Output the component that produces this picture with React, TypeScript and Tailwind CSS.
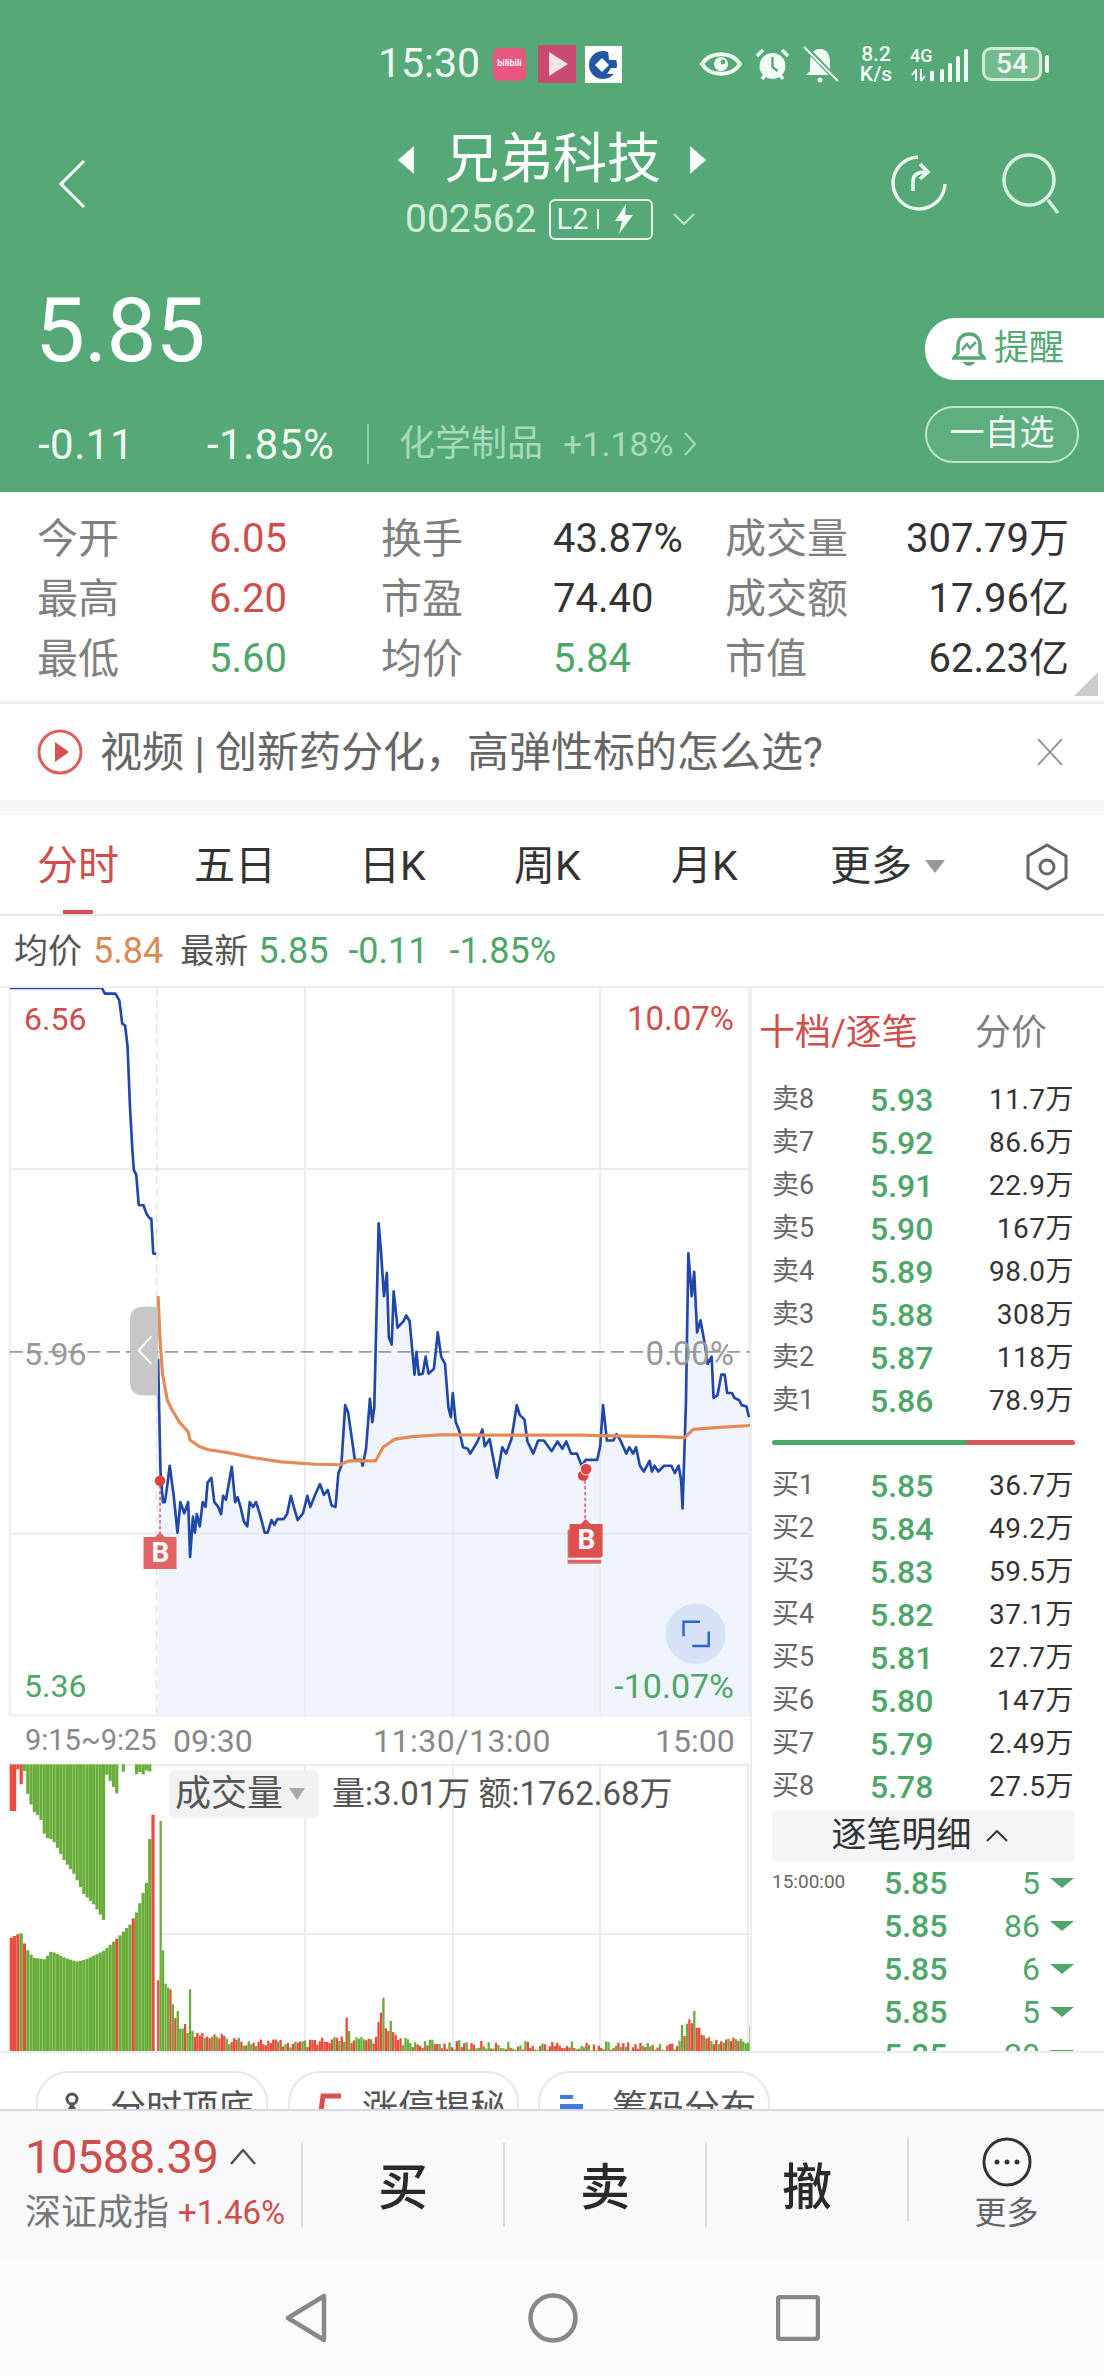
import React from "react";

const blue: [number, number][] = [[326,780],[331,1015],[336,1075],[340,1075],[345,1040],[350,1000],[358,1060],[366,1138],[372,1075],[380,1098],[388,1075],[392,1188],[398,1105],[402,1138],[406,1100],[412,1125],[418,1075],[424,1085],[428,1035],[436,1025],[442,1075],[450,1085],[456,1100],[460,1062],[466,1070],[478,1002],[485,1075],[490,1065],[496,1085],[503,1115],[510,1125],[515,1075],[522,1085],[528,1075],[536,1100],[546,1138],[552,1138],[560,1112],[566,1122],[572,1110],[585,1110],[592,1100],[600,1062],[606,1085],[614,1112],[625,1098],[634,1062],[640,1085],[650,1060],[660,1038],[668,1060],[676,1050],[684,1082],[692,1085],[698,1015],[704,1000],[712,875],[718,890],[732,988],[745,988],[748,1000],[755,965],[763,862],[768,910],[772,880],[781,500],[786,560],[792,650],[798,602],[802,735],[808,750],[812,640],[820,715],[832,702],[838,690],[845,702],[855,812],[859,765],[864,812],[872,810],[878,775],[884,810],[895,800],[903,725],[910,775],[918,790],[925,880],[930,900],[934,850],[940,910],[948,930],[955,962],[965,965],[970,975],[985,950],[995,925],[1000,960],[1010,945],[1025,1025],[1036,962],[1044,975],[1055,945],[1066,875],[1072,895],[1082,905],[1088,950],[1100,975],[1110,948],[1122,948],[1138,970],[1150,950],[1160,965],[1168,950],[1178,975],[1190,975],[1200,1000],[1208,988],[1232,988],[1238,960],[1244,875],[1252,948],[1265,948],[1272,935],[1280,948],[1292,975],[1298,962],[1306,975],[1312,962],[1320,1000],[1328,1012],[1340,990],[1345,1012],[1350,1000],[1358,1012],[1370,1000],[1385,1000],[1392,1015],[1400,1000],[1405,1030],[1408,1088],[1415,870],[1420,562],[1427,650],[1432,600],[1438,725],[1445,700],[1455,755],[1460,790],[1468,775],[1472,860],[1480,855],[1488,812],[1495,812],[1500,850],[1510,850],[1515,860],[1525,865],[1530,875],[1540,878],[1545,900]];
const pre: [number, number][] = [[20,14],[210,14],[216,26],[238,26],[246,40],[252,88],[258,92],[263,135],[268,260],[273,350],[276,390],[281,400],[286,462],[296,463],[302,480],[309,490],[312,490],[316,562],[322,563]];
const orange: [number, number][] = [[326,650],[330,740],[335,810],[345,865],[355,885],[370,910],[388,930],[392,947],[410,960],[430,967],[470,973],[520,983],[580,992],[650,997],[700,998],[720,990],[775,990],[790,962],[815,945],[850,940],[910,936],[1000,937],[1200,937],[1230,938],[1360,940],[1412,942],[1430,925],[1470,922],[1547,917]];
const pts = (a: [number, number][]) => a.map((p) => p.join(",")).join(" ");

const lerp = (a: [number, number][], x: number) => {
  if (x <= a[0][0]) return a[0][1];
  for (let i = 1; i < a.length; i++) {
    if (x <= a[i][0]) {
      const t = (x - a[i - 1][0]) / (a[i][0] - a[i - 1][0]);
      return a[i - 1][1] + t * (a[i][1] - a[i - 1][1]);
    }
  }
  return a[a.length - 1][1];
};
const rnd = (i: number) => {
  const v = Math.sin(i * 12.9898) * 43758.5453;
  return v - Math.floor(v);
};
const G = "#69ae3a";
const R = "#e84c3d";
const Y = (z: number) => z / 3 - 23;
const X = (z: number) => z / 2.063;

const botProfile: [number, number][] = [[20,590],[40,575],[50,620],[65,650],[90,655],[100,632],[110,635],[130,650],[155,662],[175,655],[210,630],[240,590],[265,550],[280,510],[300,420],[305,300],[312,228],[317,145]];
const topProfile: [number, number][] = [[50,140],[65,210],[80,230],[90,290],[105,295],[115,320],[130,360],[150,400],[170,460],[190,490],[212,540]];
const baseProfile: [number, number][] = [[325,710],[347,750],[360,845],[400,880],[440,895],[500,905],[620,915],[680,910],[700,900],[730,905],[770,900],[782,840],[795,860],[815,900],[850,912],[1000,918],[1390,920],[1400,900],[1420,850],[1440,870],[1460,905],[1530,900],[1547,915]];
const spikes: [number, number, string][] = [[330,240,G],[336,628,G],[347,745,R],[366,810,G],[392,745,G],[660,890,R],[712,830,R],[720,870,G],[782,815,R],[788,770,G],[803,840,G],[1420,835,R],[1428,810,G],[1407,852,G],[1545,855,G]];

function VolumeBars() {
  const rects: React.ReactNode[] = [];
  const base = Y(935);
  for (let zx = 20; zx < 318; zx += 6.8) {
    const x = X(zx);
    const redB = zx < 38 || (zx > 46 && zx < 49) || (zx > 237 && zx < 244) || (zx > 270 && zx < 277) || zx > 306;
    const by = lerp(botProfile, zx);
    rects.push(<rect key={"b" + zx} x={x} y={Y(by)} width={3.2} height={base - Y(by)} fill={redB ? R : G} />);
    let ty = 0;
    let col = G;
    if (zx < 28) { ty = 210; col = R; }
    else if (zx < 36) { ty = 85; col = R; }
    else if (zx < 42) { ty = 130; col = R; }
    else if (zx < 48) { ty = 90; col = G; }
    else if (zx <= 214) ty = lerp(topProfile, zx);
    else if (zx < 240) ty = lerp([[215, 95], [238, 158]], zx);
    else if (zx > 249 && zx < 258) ty = 92;
    else if (zx > 274 && zx < 311) ty = 84 + rnd(zx) * 18;
    if (ty) rects.push(<rect key={"t" + zx} x={x} y={Y(70)} width={3.2} height={Y(ty) - Y(70)} fill={col} />);
  }
  let i = 0;
  for (let zx = 324; zx < 1547; zx += 5.05) {
    i++;
    const x = X(zx);
    const j = (rnd(i) - 0.65) * 28;
    let h = Math.min(lerp(baseProfile, zx) + j, 928);
    let col = rnd(i * 3.1) > 0.62 ? G : R;
    for (const s of spikes) {
      if (Math.abs(s[0] - zx) < 2.6) { h = s[1]; col = s[2]; }
    }
    rects.push(<rect key={"s" + i} x={x} y={Y(h)} width={2.3} height={base - Y(h)} fill={col} />);
  }
  return <>{rects}</>;
}

const num = "text-[#333]";
function StatRow({ a, b, c, d, e, f, bc, dc }: { a: string; b: string; c: string; d: string; e: string; f: string; bc: string; dc: string }) {
  return (
    <>
      <span className="text-[41px] text-[#808080] h-[60px] leading-[60px]">{a}</span>
      <span className={"text-[40px] h-[60px] leading-[60px] " + bc}>{b}</span>
      <span className="text-[41px] text-[#808080] h-[60px] leading-[60px]">{c}</span>
      <span className={"text-[40px] h-[60px] leading-[60px] " + dc}>{d}</span>
      <span className="text-[41px] text-[#808080] h-[60px] leading-[60px]">{e}</span>
      <span className={"text-[40px] h-[60px] leading-[60px] text-right " + num}>{f}</span>
    </>
  );
}

function Quote({ l, p, q }: { l: string; p: string; q: string }) {
  return (
    <div className="flex items-center h-[43px] shrink-0 pl-[20px] pr-[30px]">
      <span className="w-[98px] text-[27px] text-[#666] whitespace-nowrap">{l}</span>
      <span className="text-[32px] text-[#4ea769] font-medium">{p}</span>
      <span className="flex-1 text-right text-[28px] text-[#333] tracking-[0.5px] whitespace-nowrap">{q}</span>
    </div>
  );
}

function Tick({ t, p, q }: { t?: string; p: string; q: string }) {
  return (
    <div className="flex items-center h-[43px] shrink-0 pl-[20px] pr-[29px]">
      <span className="w-[112px] text-[19px] text-[#666]">{t}</span>
      <span className="text-[32px] text-[#4ea769] font-medium">{p}</span>
      <span className="flex-1 text-right text-[32px] text-[#4ea769] pr-[9px]">{q}</span>
      <svg className="shrink-0" width="26" height="12" viewBox="0 0 26 12"><path d="M1 1h24L13 11z" fill="#4ea769" /></svg>
    </div>
  );
}

function Chip({ w, ml, icon, text }: { w: string; ml: string; icon: React.ReactNode; text: string }) {
  return (
    <div className={"h-[90px] border-2 border-[#e8e8e8] rounded-t-[32px] flex items-start pt-[16px] shrink-0 " + w + " " + ml}>
      <span className="w-[72px] flex justify-center pt-[3px] shrink-0">{icon}</span>
      <span className="text-[36px] leading-[40px] text-[#555] whitespace-nowrap">{text}</span>
    </div>
  );
}

export default function App() {
  return (
    <div className="w-[1104px] h-[2376px] bg-white overflow-hidden flex flex-col [font-family:Roboto,'Noto_Sans_CJK_SC',sans-serif]">
      {/* Header */}
      <header className="h-[492px] shrink-0 bg-[#54a976] flex flex-col text-white">
        {/* Status bar */}
        <div className="h-[130px] flex items-center pl-[378px] pb-[2px]">
          <span className="text-[41px] w-[115px] text-[#f2fbf5] whitespace-nowrap">15:30</span>
          <span className="w-[33px] h-[33px] rounded-[6px] bg-[#e9567f] flex items-center justify-center text-[9px] font-bold text-white">bilibili</span>
          <svg className="ml-[12px]" width="38" height="38" viewBox="0 0 38 38"><rect width="38" height="38" fill="#c94b70" /><path d="M11 7 L30 19 L11 31Z" fill="#fbe2e8" /></svg>
          <svg className="ml-[9px]" width="37" height="37" viewBox="0 0 37 37"><rect width="37" height="37" fill="#fff" /><circle cx="18" cy="19" r="14" fill="#2257a8" /><path d="M17 12 L24 19 L17 26 L10 19Z" fill="#fff" /><path d="M23 4 L33 14 L24 14Z" fill="#fff" /><path d="M26 22 h8 v6 h-12z" fill="#fff" /></svg>
          <svg className="ml-[78px]" width="42" height="30" viewBox="0 0 42 30"><path d="M2 15 C10 2 32 2 40 15 C32 28 10 28 2 15Z" fill="none" stroke="#f2fbf5" strokeWidth="4" /><circle cx="21" cy="15" r="7" fill="#f2fbf5" /><circle cx="23" cy="13" r="2.4" fill="#54a976" /></svg>
          <svg className="ml-[13px]" width="35" height="35" viewBox="0 0 35 35"><circle cx="17.500" cy="19" r="13" fill="#f2fbf5" /><path d="M17.500 10v10l5 4" stroke="#54a976" strokeWidth="2.500" fill="none" /><path d="M2 9 L8 3 M33 9 L27 3 M7 32l3-4 M28 32l-3-4" stroke="#f2fbf5" strokeWidth="3.500" /></svg>
          <svg className="ml-[12px]" width="37" height="38" viewBox="0 0 37 38"><path d="M18 4 C10 4 8 11 8 18 L8 26 L4 30 H32 L28 26 V18 C28 11 26 4 18 4Z" fill="#f2fbf5" /><circle cx="18" cy="35" r="2.500" fill="#f2fbf5" /><path d="M4 3 L34 34" stroke="#54a976" strokeWidth="5" /><path d="M2 2 L36 36" stroke="#f2fbf5" strokeWidth="2" /></svg>
          <div className="ml-[18px] w-[38px] flex flex-col items-center text-[#f2fbf5] font-medium">
            <span className="text-[21px] leading-[20px]">8.2</span>
            <span className="text-[21px] leading-[20px]">K/s</span>
          </div>
          <div className="ml-[15px] w-[26px] flex flex-col">
            <span className="text-[18px] leading-[18px] font-medium text-[#f2fbf5]">4G</span>
            <svg width="26" height="14" viewBox="0 0 26 14" className="mt-[3px]"><path d="M6 1v12 M2 7l4-5 M11 1v12 M11 13l4-5" stroke="#f2fbf5" strokeWidth="2" fill="none" /><rect x="20" y="3" width="4" height="10" rx="1" fill="#f2fbf5" /></svg>
          </div>
          <svg className="ml-[4px] mt-[3px]" width="30" height="35" viewBox="0 0 30 35"><rect x="0" y="21" width="4" height="13" rx="1.500" fill="#f2fbf5" /><rect x="8" y="15" width="4" height="19" rx="1.500" fill="#f2fbf5" /><rect x="16" y="8" width="4" height="26" rx="1.500" fill="#f2fbf5" /><rect x="24" y="1" width="4" height="33" rx="1.500" fill="#f2fbf5" /></svg>
          <div className="ml-[12px] w-[60px] h-[34px] rounded-[9px] border-[3px] border-[#cfe9d8] flex items-center justify-center text-[28px] font-medium leading-none text-[#f2fbf5] bg-[#74ba8f]">54</div>
          <div className="ml-[3px] w-[4px] h-[18px] rounded-[2px] bg-[#f2fbf5]" />
        </div>

        {/* Nav row */}
        <div className="h-[116px] flex items-center">
          <svg className="ml-[58px] mb-[8px] shrink-0" width="28" height="50" viewBox="0 0 28 50"><path d="M26 2 L3 25 L26 48" fill="none" stroke="#fff" strokeWidth="3" /></svg>
          <div className="ml-[311px] w-[316px] flex flex-col -mt-[2px]">
            <div className="h-[60px] flex items-center">
              <svg width="18" height="30" viewBox="0 0 18 30"><path d="M17 1 V29 L1 15Z" fill="#fff" /></svg>
              <span className="ml-[30px] text-[54px] leading-[60px] whitespace-nowrap">兄弟科技</span>
              <svg className="ml-[28px]" width="18" height="30" viewBox="0 0 18 30"><path d="M1 1 V29 L17 15Z" fill="#fff" /></svg>
            </div>
            <div className="h-[50px] flex items-center mt-[4px] ml-[8px]">
              <span className="text-[39px] leading-[50px] text-[#d3eddb]">002562</span>
              <div className="ml-[12px] w-[104px] h-[41px] border-2 border-[#e8f6ed] rounded-[6px] flex items-center pl-[6px]">
                <span className="text-[29px] leading-none text-[#eaf7ef]">L2</span>
                <span className="ml-[9px] w-[2px] h-[20px] bg-[#e8f6ed]" />
                <svg className="ml-[14px]" width="22" height="30" viewBox="0 0 22 30"><path d="M13 0 L2 17 H9 L6 30 L20 11 H12Z" fill="#f2fbf5" /></svg>
              </div>
              <svg className="ml-[20px]" width="22" height="12" viewBox="0 0 22 12"><path d="M1 1 L11 11 L21 1" fill="none" stroke="#bfe3cb" strokeWidth="2" /></svg>
            </div>
          </div>
          <svg className="ml-[176px] mb-[8px] shrink-0" width="60" height="60" viewBox="0 0 60 60"><path d="M29 3 A26 26 0 1 0 56 30" fill="none" stroke="#eaf7ef" strokeWidth="3.500" /><path d="M24 37 V27 C24 21 29 18 37 18 M31 10 L39 18 L31 25" fill="none" stroke="#eaf7ef" strokeWidth="3.500" /></svg>
          <svg className="ml-[53px] mb-[8px] shrink-0" width="60" height="62" viewBox="0 0 60 62"><circle cx="27" cy="27" r="25" fill="none" stroke="#d9f0e1" strokeWidth="3.500" /><path d="M46 47 L56 60" stroke="#d9f0e1" strokeWidth="3.500" /></svg>
        </div>

        {/* Price block */}
        <div className="flex-1 flex">
          <div className="pl-[38px] flex flex-col">
            <span className="mt-[37px] -ml-[3px] h-[96px] text-[89px] leading-[96px] tracking-[-1px]">5.85</span>
            <div className="mt-[43px] h-[44px] flex items-center whitespace-nowrap">
              <span className="w-[169px] text-[42px] tracking-[0.5px] text-[#f0faf3]">-0.11</span>
              <span className="w-[160px] text-[42px] tracking-[0.5px] text-[#f0faf3]">-1.85%</span>
              <span className="w-[2px] h-[40px] bg-[#8cc9a4]" />
              <span className="ml-[30px] text-[36px] text-[#a8d9ba]">化学制品</span>
              <span className="ml-[20px] text-[34px] text-[#a8d9ba]">+1.18%</span>
              <svg className="ml-[10px]" width="12" height="24" viewBox="0 0 12 24"><path d="M1 1 L11 12 L1 23" fill="none" stroke="#a8d9ba" strokeWidth="2" /></svg>
            </div>
          </div>
          <div className="ml-auto w-[179px] flex flex-col pt-[72px]">
            <div className="h-[62px] bg-white rounded-l-[30px] flex items-center pl-[27px]">
              <svg width="34" height="36" viewBox="0 0 34 36"><path d="M17 3 C9 3 6 9 6 15 V22 L2 27 H32 L28 22 V15 C28 9 25 3 17 3Z" fill="none" stroke="#54a976" strokeWidth="3.500" /><path d="M11 31 C13 36 21 36 23 31" fill="#54a976" /><path d="M10 19 L15 13 L18 17 L24 11" fill="none" stroke="#54a976" strokeWidth="2.500" /></svg>
              <span className="ml-[8px] text-[35px] text-[#54a976]">提醒</span>
            </div>
            <div className="mt-[26px] w-[154px] h-[57px] rounded-full border-2 border-[#bfe3cb] bg-[#5eae7e] flex items-center justify-center text-[35px] text-[#f2fbf5] whitespace-nowrap">一自选</div>
          </div>
        </div>
      </header>

      {/* Stats */}
      <section className="relative h-[212px] shrink-0 pl-[37px] pr-[35px] pt-[17px] border-b-[3px] border-[#efefef]">
        <div className="grid grid-cols-[172px_172px_172px_172px_1fr_auto] whitespace-nowrap">
          <StatRow a="今开" b="6.05" bc="text-[#cf4e4c]" c="换手" d="43.87%" dc={num} e="成交量" f="307.79万" />
          <StatRow a="最高" b="6.20" bc="text-[#cf4e4c]" c="市盈" d="74.40" dc={num} e="成交额" f="17.96亿" />
          <StatRow a="最低" b="5.60" bc="text-[#4ea769]" c="均价" d="5.84" dc="text-[#4ea769]" e="市值" f="62.23亿" />
        </div>
        <svg className="absolute right-[6px] bottom-[5px]" width="24" height="24" viewBox="0 0 24 24"><path d="M24 0 V24 H0Z" fill="#cccccc" /></svg>
      </section>

      {/* Notice */}
      <div className="h-[96px] shrink-0 flex items-center pl-[37px] border-b-[15px] border-[#f7f7f7] box-content">
        <svg className="shrink-0" width="46" height="48" viewBox="0 0 46 48"><circle cx="23" cy="24" r="21" fill="none" stroke="#d9605c" strokeWidth="3" /><path d="M18 14 L32 24 L18 34Z" fill="#d9504c" /></svg>
        <span className="ml-[17px] text-[42px] text-[#666] whitespace-nowrap">视频 | 创新药分化，高弹性标的怎么选?</span>
        <svg className="ml-auto mr-[40px] shrink-0" width="28" height="28" viewBox="0 0 28 28"><path d="M2 1 L26 27 M26 1 L2 27" stroke="#9a9a9a" strokeWidth="2" /></svg>
      </div>

      {/* Tabs */}
      <nav className="relative h-[101px] shrink-0 flex items-center pl-[37px] pt-[4px] border-b-2 border-[#e8e8e8] text-[41px] text-[#333] whitespace-nowrap">
        <span className="w-[157px] text-[#cf4e4c]">分时</span>
        <span className="w-[165px]">五日</span>
        <span className="w-[155px]">日K</span>
        <span className="w-[157px]">周K</span>
        <span className="w-[159px]">月K</span>
        <span className="w-[195px] flex items-center">
          更多
          <svg className="ml-[13px]" width="20" height="13" viewBox="0 0 20 13"><path d="M0 0 H20 L10 13Z" fill="#999" /></svg>
        </span>
        <svg className="shrink-0" width="44" height="48" viewBox="0 0 44 48"><path d="M22 2 L41 13 V35 L22 46 L3 35 V13Z" fill="none" stroke="#666" strokeWidth="3" strokeLinejoin="round" /><circle cx="22" cy="24" r="7" fill="none" stroke="#666" strokeWidth="3" /></svg>
        <span className="absolute left-[63px] bottom-0 w-[30px] h-[4px] bg-[#d9504c]" />
      </nav>

      {/* Latest row */}
      <div className="h-[70px] shrink-0 flex items-center pl-[14px] text-[36px] whitespace-nowrap">
        <span className="text-[#555] text-[34px]">均价</span>
        <span className="ml-[11px] text-[#d98a55]">5.84</span>
        <span className="ml-[17px] text-[#555] text-[34px]">最新</span>
        <span className="ml-[10px] text-[#4ea769]">5.85</span>
        <span className="ml-[20px] text-[#4ea769]">-0.11</span>
        <span className="ml-[21px] text-[#4ea769]">-1.85%</span>
      </div>

      {/* Body */}
      <div className="h-[1067px] shrink-0 flex border-t-2 border-b-2 border-[#eeeeee] overflow-hidden">
        <div className="w-[750px] shrink-0 flex flex-col">
          {/* Time-share chart */}
          <div className="relative h-[729px] shrink-0">
            <svg className="block overflow-visible" width="750" height="729" viewBox="0 14.4 1547 1504">
              {[388, 1140, 1515].map((y) => <line key={y} x1="20" x2="1547" y1={y} y2={y} stroke="#ececec" strokeWidth="4" />)}
              {[20, 629, 935, 1238, 1545].map((x) => <line key={x} x1={x} x2={x} y1="14" y2="1515" stroke="#ececec" strokeWidth="4" />)}
              <line x1="323" x2="323" y1="14" y2="1515" stroke="#e2e2e2" strokeWidth="3" strokeDasharray="16 10" />
              <polygon points={`326,1515 ${pts(blue)} 1545,1515`} fill="#eff4fd" />
              {[1140].map((y) => <line key={y} x1="326" x2="1547" y1={y} y2={y} stroke="#e3e7f0" strokeWidth="3" />)}
              {[629, 935, 1238].map((x) => <line key={x} x1={x} x2={x} y1="800" y2="1515" stroke="#e3e7f0" strokeWidth="3" opacity="0.7" />)}
              <line x1="20" x2="1547" y1="765" y2="765" stroke="#999" strokeWidth="3.500" strokeDasharray="27 13" />
              <polyline points={pts(pre)} fill="none" stroke="#2148a8" strokeWidth="5.500" strokeLinejoin="round" />
              <polyline points={pts(blue)} fill="none" stroke="#2148a8" strokeWidth="5.500" strokeLinejoin="round" />
              <polyline points={pts(orange)} fill="none" stroke="#e58a55" strokeWidth="6.500" strokeLinejoin="round" />
              <path d="M326 672 H296 Q268 672 268 700 V827 Q268 855 296 855 H326Z" fill="#c4c4c4" opacity="0.95" />
              <path d="M312 733 L286 762 L312 790" fill="none" stroke="#fff" strokeWidth="4" />
              <line x1="330" x2="330" y1="1040" y2="1140" stroke="#d9505c" strokeWidth="3" strokeDasharray="7 5" />
              <circle cx="330" cy="1031" r="11" fill="#dc4444" />
              <path d="M296 1147 H320 L330 1137 L340 1147 H364 V1213 H296Z" fill="#e06464" />
              <line x1="1207" x2="1207" y1="1030" y2="1115" stroke="#d9505c" strokeWidth="3" strokeDasharray="7 5" />
              <circle cx="1203" cy="1020" r="11" fill="#dc4444" />
              <circle cx="1209" cy="1007" r="13" fill="#fff" />
              <circle cx="1209" cy="1007" r="11" fill="#dc4444" />
              <rect x="1171" y="1132" width="69" height="70" fill="#e06464" />
              <rect x="1171" y="1190" width="69" height="4" fill="#fff" />
              <path d="M1175 1120 H1198 L1208 1110 L1218 1120 H1243 V1188 H1175Z" fill="#dc5050" />
              <circle cx="1435" cy="1347" r="62" fill="#d6e2f8" />
              <path d="M1410 1352 V1322 H1444 M1462 1342 V1372 H1428" fill="none" stroke="#2f62d0" strokeWidth="5" />
            </svg>
            <span className="absolute left-[24px] top-[14px] text-[32px] leading-[34px] text-[#cf4e4c]">6.56</span>
            <span className="absolute right-[16px] top-[14px] text-[33px] leading-[34px] text-[#cf4e4c]">10.07%</span>
            <span className="absolute left-[24px] top-[349px] text-[32px] leading-[34px] text-[#999]">5.96</span>
            <span className="absolute right-[16px] top-[349px] text-[33px] leading-[34px] text-[#999]">0.00%</span>
            <span className="absolute left-[24px] top-[681px] text-[32px] leading-[34px] text-[#4ea769]">5.36</span>
            <span className="absolute right-[16px] top-[681px] text-[34px] leading-[34px] text-[#4ea769]">-10.07%</span>
            <span className="absolute left-[144px] top-[550px] w-[33px] text-center text-[28px] leading-[30px] font-bold text-white">B</span>
            <span className="absolute left-[570px] top-[537px] w-[33px] text-center text-[28px] leading-[30px] font-bold text-white">B</span>
          </div>
          {/* Axis */}
          <div className="relative h-[47px] shrink-0 flex items-center pl-[25px] text-[32px] text-[#888] whitespace-nowrap">
            <span className="w-[148px] text-[29px]">9:15~9:25</span>
            <span className="w-[200px]">09:30</span>
            <span className="w-[282px] tracking-[0.5px]">11:30/13:00</span>
            <span>15:00</span>
          </div>
          {/* Volume */}
          <div className="relative flex-1">
            <svg className="block" width="750" height="290" viewBox="0 0 750 290">
              <line x1="10" x2="750" y1="1" y2="1" stroke="#ececec" strokeWidth="2" />
              <line x1="160" x2="750" y1="170" y2="170" stroke="#ececec" strokeWidth="2" />
              {[305, 453, 600, 748].map((x) => <line key={x} x1={x} x2={x} y1="0" y2="289" stroke="#ececec" strokeWidth="2" />)}
              <VolumeBars />
            </svg>
            <div className="absolute left-[169px] top-[6px] w-[150px] h-[48px] bg-[#f2f2f2] rounded-[6px] flex items-center pl-[6px] text-[36px] leading-none text-[#555] whitespace-nowrap">
              成交量
              <svg className="ml-[6px]" width="16" height="12" viewBox="0 0 16 12"><path d="M0 0 H16 L8 12Z" fill="#aaa" /></svg>
            </div>
            <span className="absolute left-[332px] top-[11px] text-[33px] leading-[38px] text-[#555] whitespace-nowrap">量:3.01万 额:1762.68万</span>
          </div>
        </div>

        {/* Right panel */}
        <aside className="flex-1 border-l-2 border-[#eeeeee] flex flex-col overflow-hidden">
          <div className="h-[90px] shrink-0 flex items-center pl-[7px] text-[36px] whitespace-nowrap">
            <span className="w-[214px] text-[#cf4e4c]">十档/逐笔</span>
            <span className="text-[#808080] ml-[2px]">分价</span>
          </div>
          <Quote l="卖8" p="5.93" q="11.7万" />
          <Quote l="卖7" p="5.92" q="86.6万" />
          <Quote l="卖6" p="5.91" q="22.9万" />
          <Quote l="卖5" p="5.90" q="167万" />
          <Quote l="卖4" p="5.89" q="98.0万" />
          <Quote l="卖3" p="5.88" q="308万" />
          <Quote l="卖2" p="5.87" q="118万" />
          <Quote l="卖1" p="5.86" q="78.9万" />
          <div className="h-[40px] shrink-0 flex items-center pl-[20px]">
            <div className="w-[195px] h-[5px] rounded-l-full bg-[#4ea769]" />
            <div className="w-[108px] h-[5px] rounded-r-full bg-[#d9585a]" />
          </div>
          <div className="h-[2px] shrink-0" />
          <Quote l="买1" p="5.85" q="36.7万" />
          <Quote l="买2" p="5.84" q="49.2万" />
          <Quote l="买3" p="5.83" q="59.5万" />
          <Quote l="买4" p="5.82" q="37.1万" />
          <Quote l="买5" p="5.81" q="27.7万" />
          <Quote l="买6" p="5.80" q="147万" />
          <Quote l="买7" p="5.79" q="2.49万" />
          <Quote l="买8" p="5.78" q="27.5万" />
          <div className="mt-[3px] ml-[20px] w-[303px] h-[50px] shrink-0 bg-[#f5f5f7] flex items-center justify-center pr-[8px] text-[35px] text-[#333] whitespace-nowrap">
            逐笔明细
            <svg className="ml-[14px]" width="22" height="12" viewBox="0 0 22 12"><path d="M1 11 L11 1 L21 11" fill="none" stroke="#333" strokeWidth="2" /></svg>
          </div>
          <Tick t="15:00:00" p="5.85" q="5" />
          <Tick p="5.85" q="86" />
          <Tick p="5.85" q="6" />
          <Tick p="5.85" q="5" />
          <Tick p="5.85" q="20" />
        </aside>
      </div>

      {/* Chips */}
      <div className="h-[56px] shrink-0 overflow-hidden flex pt-[18px]">
        <Chip w="w-[232px]" ml="ml-[36px]" text="分时顶底" icon={<svg width="40" height="36" viewBox="0 0 40 36"><circle cx="18" cy="7" r="5" fill="none" stroke="#555" strokeWidth="3" /><path d="M6 34 L18 14 L30 34" fill="none" stroke="#555" strokeWidth="4" /></svg>} />
        <Chip w="w-[231px]" ml="ml-[20px]" text="涨停揭秘" icon={<svg width="34" height="36" viewBox="0 0 34 36"><path d="M2 34 H10 L14 4 H32" fill="none" stroke="#d9504c" strokeWidth="5" /></svg>} />
        <Chip w="w-[232px]" ml="ml-[19px]" text="筹码分布" icon={<svg width="32" height="36" viewBox="0 0 32 36"><rect x="0" y="3" width="13" height="4" fill="#3f7be0" /><rect x="0" y="12" width="23" height="5" fill="#3f7be0" /></svg>} />
      </div>

      {/* Bottom bar */}
      <div className="h-[150px] shrink-0 bg-[#f9f9fb] border-t-2 border-[#d8d8e0] flex pt-[32px] relative">
        <div className="w-[301px] h-[84px] shrink-0 flex flex-col justify-center pl-[25px] whitespace-nowrap">
          <div className="h-[56px] shrink-0 flex items-center">
            <span className="text-[47px] leading-[48px] text-[#cf4e4c] tracking-[-0.5px]">10588.39</span>
            <svg className="ml-[12px]" width="26" height="16" viewBox="0 0 26 16"><path d="M1 15 L13 1 L25 15" fill="none" stroke="#555" strokeWidth="2.500" /></svg>
          </div>
          <div className="h-[56px] shrink-0 flex items-center">
            <span className="text-[36px] text-[#777]">深证成指</span>
            <span className="ml-[9px] text-[33px] text-[#cf4e4c]">+1.46%</span>
          </div>
        </div>
        {["买", "卖", "撤"].map((t) => (
          <div key={t} className="w-[202px] h-[84px] shrink-0 border-l-2 border-[#dcdcdc] flex items-center justify-center pt-[6px] text-[50px] font-medium text-[#2a2a2a]">{t}</div>
        ))}
        <div className="flex-1 h-[84px] border-l-2 border-[#dcdcdc] flex flex-col items-center -mt-[6px]">
          <svg className="shrink-0" width="50" height="50" viewBox="0 0 50 50"><circle cx="25" cy="25" r="23" fill="none" stroke="#333" strokeWidth="3" /><circle cx="15" cy="25" r="2.500" fill="#333" /><circle cx="25" cy="25" r="2.500" fill="#333" /><circle cx="35" cy="25" r="2.500" fill="#333" /></svg>
          <span className="mt-[6px] text-[32px] leading-[40px] text-[#666]">更多</span>
        </div>
      </div>

      {/* System nav */}
      <div className="flex-1 bg-[#fbfbfc] flex items-center pl-[285px]">
        <svg width="42" height="50" viewBox="0 0 42 50"><path d="M39 3 V47 L3 25Z" fill="none" stroke="#888" strokeWidth="4.500" strokeLinejoin="round" /></svg>
        <svg className="ml-[201px]" width="50" height="50" viewBox="0 0 50 50"><circle cx="25" cy="25" r="22.500" fill="none" stroke="#888" strokeWidth="4.500" /></svg>
        <svg className="ml-[198px]" width="44" height="46" viewBox="0 0 44 46"><rect x="2" y="2" width="40" height="42" rx="2" fill="none" stroke="#888" strokeWidth="4.500" /></svg>
      </div>
    </div>
  );
}
